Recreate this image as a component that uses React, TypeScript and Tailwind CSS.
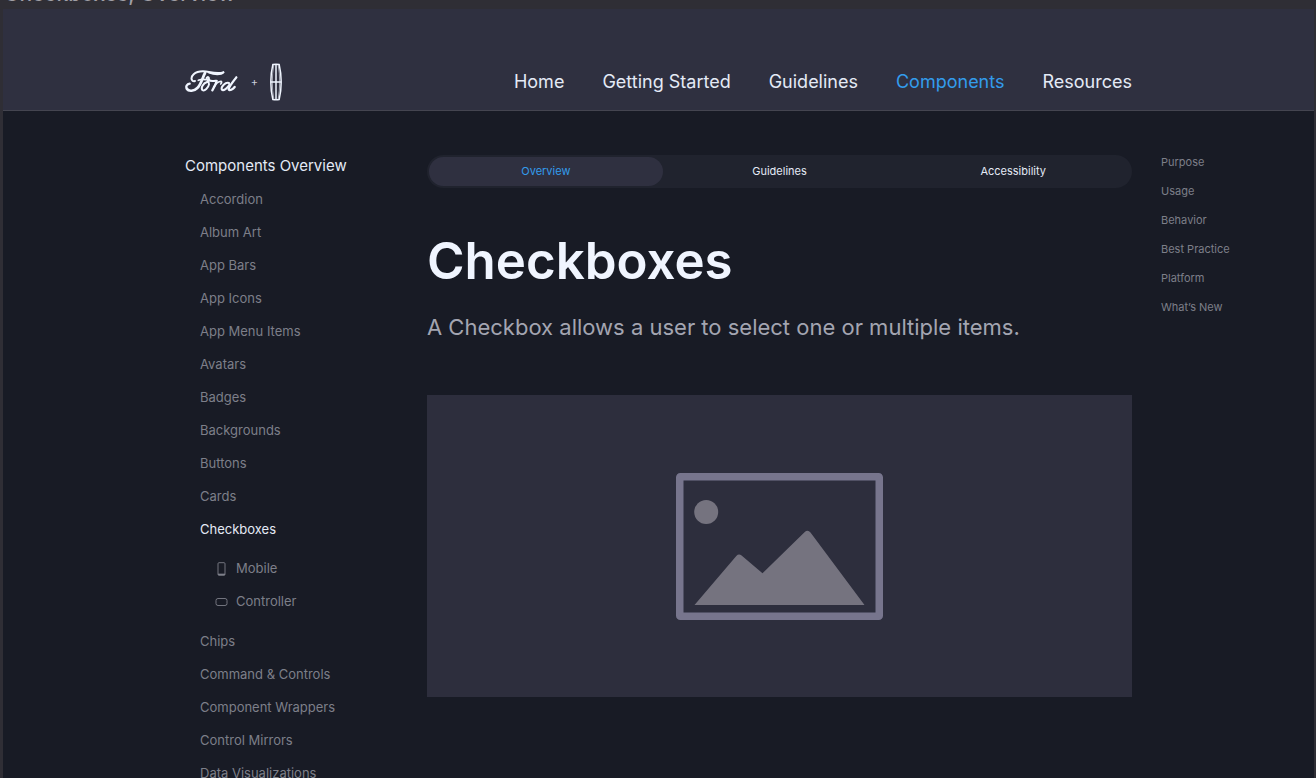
import React from "react";

const navLinks = ["Home", "Getting Started", "Guidelines", "Components", "Resources"];

const componentsBefore = [
  "Accordion",
  "Album Art",
  "App Bars",
  "App Icons",
  "App Menu Items",
  "Avatars",
  "Badges",
  "Backgrounds",
  "Buttons",
  "Cards",
  "Checkboxes",
];

const componentsAfter = [
  "Chips",
  "Command & Controls",
  "Component Wrappers",
  "Control Mirrors",
  "Data Visualizations",
];

const tabs = ["Overview", "Guidelines", "Accessibility"];

const sections = ["Purpose", "Usage", "Behavior", "Best Practice", "Platform", "What’s New"];

const FordLogo = () => (
  <svg
    width="54"
    height="24"
    viewBox="0 0 162 72"
    fill="none"
    stroke="#f0f5ff"
    strokeLinecap="round"
    strokeLinejoin="round"
    role="img"
    aria-label="Ford"
  >
    <path strokeWidth="6" d="M30 33C18 36 16 22 26 13C38 2 56 3 72 6C88 9 102 11 115 7" />
    <path strokeWidth="6" d="M72 8C88 14 108 15 115 7" />
    <path strokeWidth="8" d="M60 9C52 24 48 44 37 54C27 64 11 65 6 57" />
    <path strokeWidth="7" d="M6 57C1 49 6 42 14 41" />
    <path strokeWidth="5" d="M40 31C48 28 57 28 62 29" />
    <path strokeWidth="6" d="M66 36C54 40 47 54 52 60C59 65 70 53 72 43C73 34 64 30 65 24C68 18 74 23 71 28C75 34 84 34 92 32" />
    <path strokeWidth="7" d="M95 33C92 44 87 53 82 61" />
    <path strokeWidth="5" d="M86 51C93 40 101 34 108 34C112 36 109 40 107 42" />
    <path strokeWidth="6" d="M132 39C121 35 108 50 110 58C115 65 128 54 134 43" />
    <path strokeWidth="7" d="M154 22C145 34 132 49 131 58C133 64 144 58 149 51" />
  </svg>
);

const LincolnLogo = () => (
  <svg
    width="12"
    height="38"
    viewBox="0 0 12 38"
    fill="none"
    stroke="#f0f5ff"
    role="img"
    aria-label="Lincoln"
  >
    <path strokeWidth="1.5" d="M2.8 1.6Q6 .8 9.2 1.6Q11.2 10 11.2 19Q11.2 28 9.2 36.4Q6 37.2 2.8 36.4Q.8 28 .8 19Q.8 10 2.8 1.6Z" />
    <path strokeWidth="0.6" d="M3.8 2Q2.3 10 2.3 19Q2.3 28 3.8 36M8.2 2Q9.7 10 9.7 19Q9.7 28 8.2 36" />
    <path strokeWidth="1.5" d="M6 2V36M1 19H11" />
  </svg>
);

const MobileIcon = () => (
  <svg width="13" height="14" viewBox="0 0 13 14" fill="none" stroke="currentColor" aria-hidden="true">
    <rect x="3" y="0.7" width="7" height="12.6" rx="1" strokeWidth="0.9" />
    <path d="M3 12.4H10" strokeWidth="1.5" />
  </svg>
);

const ControllerIcon = () => (
  <svg width="13" height="14" viewBox="0 0 13 14" fill="none" stroke="currentColor" aria-hidden="true">
    <rect x="1" y="3.5" width="11" height="7" rx="2" strokeWidth="0.9" />
  </svg>
);

const PlaceholderImage = () => (
  <svg width="207" height="147" viewBox="0 0 207 147" role="img" aria-label="Image placeholder">
    <rect x="3.75" y="3.75" width="199.5" height="139.5" rx="0.5" fill="none" stroke="#77758d" strokeWidth="7.5" strokeLinejoin="round" />
    <circle cx="30.2" cy="39" r="12" fill="#75737f" />
    <path
      fill="#75737f"
      d="M18.5 132L60.3 83Q62.8 80.4 65.6 82.6L86.5 100.3L128.5 59.2Q131.7 56.2 134.5 59.4L188.5 132Z"
    />
  </svg>
);

const App = () => {
  return (
    <div className="flex h-screen flex-col overflow-hidden bg-[#2f2e35] font-['Inter',sans-serif]">
      <div className="flex h-[9px] shrink-0 items-end overflow-hidden px-1">
        <p className="pb-[5px] text-[21px] leading-5 font-medium text-[#a09fa6]">Checkboxes, Overview</p>
      </div>

      <div className="mr-0.5 ml-[3px] flex min-h-0 flex-1 flex-col bg-[#181b25]">
        <header className="flex shrink-0 items-center justify-between border-b border-[#444550] bg-[#2f3040] pt-[54px] pr-[182px] pb-[9px] pl-[182px]">
          <a href="#" className="flex items-center text-[#c9cedb]">
            <FordLogo />
            <span className="w-[31px] text-center text-[11px]">+</span>
            <LincolnLogo />
          </a>
          <nav className="flex gap-[38px] text-lg">
            {navLinks.map((link) => (
              <a
                key={link}
                href="#"
                className={link === "Components" ? "text-[#339cec]" : "text-[#e4eaf6]"}
              >
                {link}
              </a>
            ))}
          </nav>
        </header>

        <div className="flex pl-[182px]">
          <aside className="w-[242px] shrink-0 pt-[45px] text-[13px] leading-[17px] text-[#7d7f89]">
            <a href="#" className="block text-[15px] leading-5 text-[#e4eaf6]">
              Components Overview
            </a>
            <ul className="mt-[15px] flex flex-col gap-4 pl-[15px]">
              {componentsBefore.map((name) => (
                <li key={name}>
                  <a href="#" className={name === "Checkboxes" ? "text-[#e4eaf6]" : ""}>
                    {name}
                  </a>
                </li>
              ))}
            </ul>
            <ul className="mt-[22px] mb-[23px] flex flex-col gap-4 pl-[30px]">
              <li>
                <a href="#" className="flex items-center gap-2">
                  <MobileIcon />
                  Mobile
                </a>
              </li>
              <li>
                <a href="#" className="flex items-center gap-2">
                  <ControllerIcon />
                  Controller
                </a>
              </li>
            </ul>
            <ul className="flex flex-col gap-4 pl-[15px]">
              {componentsAfter.map((name) => (
                <li key={name}>
                  <a href="#">{name}</a>
                </li>
              ))}
            </ul>
          </aside>

          <main className="min-w-0 flex-1 pt-11">
            <div className="flex rounded-full bg-[#20232e] p-0.5">
              {tabs.map((tab) => (
                <button
                  key={tab}
                  type="button"
                  className={
                    tab === "Overview"
                      ? "h-[29px] flex-1 rounded-full bg-[#2f3040] text-[11px] text-[#339cec]"
                      : "h-[29px] flex-1 rounded-full text-[11px] text-[#e4eaf6]"
                  }
                >
                  {tab}
                </button>
              ))}
            </div>
            <h1 className="mt-[41px] text-[51px] leading-[64px] font-semibold text-[#f0f5ff]">Checkboxes</h1>
            <p className="mt-5 text-[22px] leading-7 text-[#a3a5b1]">
              A Checkbox allows a user to select one or multiple items.
            </p>
            <div className="mt-[54px] flex h-[302px] items-center justify-center bg-[#2d2e3d]">
              <PlaceholderImage />
            </div>
          </main>

          <aside className="w-[182px] shrink-0 pt-11 pl-[29px] text-[11px] leading-[15px] text-[#7d7f89]">
            <ul className="flex flex-col gap-3.5">
              {sections.map((section) => (
                <li key={section}>
                  <a href="#">{section}</a>
                </li>
              ))}
            </ul>
          </aside>
        </div>
      </div>
    </div>
  );
};

export default App;
